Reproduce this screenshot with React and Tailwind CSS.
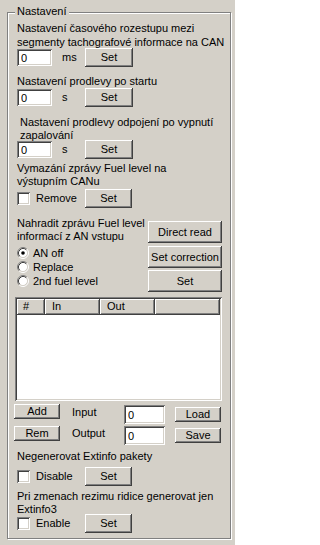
import React from "react";

const raised =
  "bg-[#d4d0c8] shadow-[inset_-1px_-1px_0_#404040,inset_1px_1px_0_#ffffff,inset_-2px_-2px_0_#808080]";
const sunken =
  "bg-white shadow-[inset_1px_1px_0_#808080,inset_-1px_-1px_0_#ffffff,inset_2px_2px_0_#404040,inset_-2px_-2px_0_#d4d0c8]";

const Button = ({ children, className = "" }) => (
  <button
    type="button"
    className={`${raised} flex items-center justify-center leading-[13px] text-black ${className}`}
  >
    {children}
  </button>
);

const TextBox = ({ className = "" }) => (
  <input
    readOnly
    defaultValue="0"
    className={`${sunken} pl-[4px] text-[11px] leading-[13px] text-black outline-none ${className}`}
  />
);

const CheckBox = () => <span className={`${sunken} block w-[13px] h-[13px] shrink-0`} />;

const Radio = ({ checked }) => (
  <svg width="12" height="12" viewBox="0 0 12 12" className="shrink-0">
    <circle cx="6" cy="6" r="4.5" fill="#ffffff" />
    <path d="M2.11 9.89 A5.5 5.5 0 0 1 9.89 2.11" fill="none" stroke="#808080" />
    <path d="M9.89 2.11 A5.5 5.5 0 0 1 2.11 9.89" fill="none" stroke="#ffffff" />
    <path d="M2.82 9.18 A4.5 4.5 0 0 1 9.18 2.82" fill="none" stroke="#404040" />
    <path d="M9.18 2.82 A4.5 4.5 0 0 1 2.82 9.18" fill="none" stroke="#d4d0c8" />
    {checked && <circle cx="6" cy="6" r="1.8" fill="#000000" />}
  </svg>
);

const ValueRow = ({ unit, className = "" }) => (
  <div className={`relative flex items-center h-[19px] ${className}`}>
    <TextBox className="w-[35px] h-[17px]" />
    <span className="w-[33px] pl-[10px] leading-[13px]">{unit}</span>
    <Button className="w-[48px] h-[19px]">Set</Button>
  </div>
);

const CheckRow = ({ label, className = "" }) => (
  <div className={`relative flex items-center h-[19px] ${className}`}>
    <CheckBox />
    <span className="w-[55px] pl-[6px] leading-[13px]">{label}</span>
    <Button className="w-[47px] h-[19px]">Set</Button>
  </div>
);

const RadioRow = ({ label, checked }) => (
  <div className="flex items-center h-[14px] gap-[4px]">
    <Radio checked={checked} />
    <span className="leading-[13px]">{label}</span>
  </div>
);

export default function App() {
  return (
    <div className="w-[235px] h-[545px] overflow-hidden bg-[#d4d0c8] pt-[12px] pl-[7px] font-['Liberation_Sans',Arial,sans-serif] text-[11px] text-black">
      <div className="relative w-[224px] h-[527px] border border-[#808080] shadow-[inset_1px_1px_0_#ffffff,1px_1px_0_#ffffff] pl-[9px] pt-[8px] flex flex-col">
        <span className="absolute -top-[8px] left-[7px] bg-[#d4d0c8] px-[2px] leading-[13px]">
          Nastavení
        </span>

        <p className="leading-[14px]">
          Nastavení časového rozestupu mezi
          <br />
          segmenty tachografové informace na CAN
        </p>
        <ValueRow unit="ms" className="-mt-[1px]" />

        <p className="leading-[13px] mt-[8px]">Nastavení prodlevy po startu</p>
        <ValueRow unit="s" />

        <p className="leading-[13px] mt-[9px] pl-[3px]">
          Nastavení prodlevy odpojení po vypnutí
          <br />
          zapalování
        </p>
        <ValueRow unit="s" className="-mt-[2px]" />

        <p className="leading-[13px] mt-[3px]">
          Vymazání zprávy Fuel level na
          <br />
          výstupním CANu
        </p>
        <CheckRow label="Remove" className="mt-[1px]" />

        <div className="flex mt-[9px]">
          <div className="w-[131px] flex flex-col">
            <p className="leading-[13px]">
              Nahradit zprávu Fuel level
              <br />
              informací z AN vstupu
            </p>
            <div className="mt-[3px] flex flex-col">
              <RadioRow label="AN off" checked />
              <RadioRow label="Replace" />
              <RadioRow label="2nd fuel level" />
            </div>
          </div>
          <div className="w-[74px] flex flex-col mt-[4px]">
            <Button className="w-[74px] h-[22px]">Direct read</Button>
            <Button className="w-[74px] h-[22px] mt-[3px]">Set correction</Button>
            <Button className="w-[74px] h-[22px] mt-[2px]">Set</Button>
          </div>
        </div>

        <div className={`${sunken} mt-[5px] -ml-[2px] w-[207px] h-[104px] p-[2px]`}>
          <div className="flex h-[16px]">
            <div className={`${raised} w-[28px] pl-[6px] leading-[15px]`}>#</div>
            <div className={`${raised} w-[55px] pl-[7px] leading-[15px]`}>In</div>
            <div className={`${raised} w-[55px] pl-[7px] leading-[15px]`}>Out</div>
            <div className={`${raised} flex-1`} />
          </div>
        </div>

        <div className="flex mt-[3px]">
          <div className="flex flex-col -ml-[3px]">
            <Button className="w-[46px] h-[15px]">Add</Button>
            <Button className="w-[46px] h-[15px] mt-[7px]">Rem</Button>
          </div>
          <div className="flex flex-col w-[52px] ml-[12px]">
            <span className="leading-[13px] mt-[2px]">Input</span>
            <span className="leading-[13px] mt-[8px]">Output</span>
          </div>
          <div className="flex flex-col">
            <TextBox className="w-[41px] h-[19px] mt-[1px]" />
            <TextBox className="w-[41px] h-[19px] mt-[2px]" />
          </div>
          <div className="flex flex-col ml-[10px]">
            <Button className="w-[46px] h-[15px] mt-[3px]">Load</Button>
            <Button className="w-[46px] h-[15px] mt-[6px]">Save</Button>
          </div>
        </div>

        <p className="leading-[13px] mt-[5px]">Negenerovat Extinfo pakety</p>
        <CheckRow label="Disable" className="mt-[4px]" />

        <p className="leading-[13px] mt-[4px]">
          Pri zmenach rezimu ridice generovat jen
          <br />
          Extinfo3
        </p>
        <CheckRow label="Enable" className="-mt-[2px]" />
      </div>
    </div>
  );
}
